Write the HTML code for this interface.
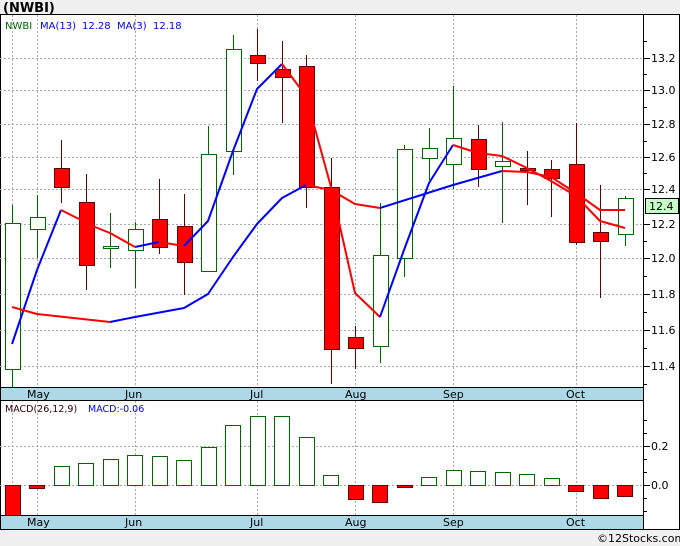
<!DOCTYPE html>
<html><head><meta charset="utf-8"><style>
body{margin:0;width:680px;height:546px;overflow:hidden;background:#f0f0f0;font-family:"DejaVu Sans","Liberation Sans",sans-serif}
</style></head><body>
<svg width="680" height="546" xmlns="http://www.w3.org/2000/svg" style="position:absolute;left:0;top:0" font-family="DejaVu Sans, Liberation Sans, sans-serif">
<rect x="0" y="0" width="680" height="546" fill="#f0f0f0"/>
<text x="3" y="12" font-size="13" font-weight="bold" fill="#000">(NWBI)</text>
<rect x="0.5" y="14.5" width="679" height="515" fill="#fff" stroke="#000"/>
<g stroke="#aaa" stroke-dasharray="2,2" stroke-width="1">
<line x1="0" x2="643" y1="58.5" y2="58.5"/><line x1="0" x2="643" y1="90.5" y2="90.5"/><line x1="0" x2="643" y1="124.5" y2="124.5"/><line x1="0" x2="643" y1="157.5" y2="157.5"/><line x1="0" x2="643" y1="189.5" y2="189.5"/><line x1="0" x2="643" y1="224.5" y2="224.5"/><line x1="0" x2="643" y1="258.5" y2="258.5"/><line x1="0" x2="643" y1="294.5" y2="294.5"/><line x1="0" x2="643" y1="330.5" y2="330.5"/><line x1="0" x2="643" y1="366.5" y2="366.5"/>
<line x1="0" x2="643" y1="446.5" y2="446.5"/><line x1="0" x2="643" y1="485.5" y2="485.5"/>
<line x1="12.5" x2="12.5" y1="15" y2="387"/><line x1="37.5" x2="37.5" y1="15" y2="387"/><line x1="135.5" x2="135.5" y1="15" y2="387"/><line x1="257.5" x2="257.5" y1="15" y2="387"/><line x1="355.5" x2="355.5" y1="15" y2="387"/><line x1="453.5" x2="453.5" y1="15" y2="387"/><line x1="576.5" x2="576.5" y1="15" y2="387"/>
<line x1="12.5" x2="12.5" y1="401" y2="515"/><line x1="37.5" x2="37.5" y1="401" y2="515"/><line x1="135.5" x2="135.5" y1="401" y2="515"/><line x1="257.5" x2="257.5" y1="401" y2="515"/><line x1="355.5" x2="355.5" y1="401" y2="515"/><line x1="453.5" x2="453.5" y1="401" y2="515"/><line x1="576.5" x2="576.5" y1="401" y2="515"/>
</g>
<text x="5" y="29" font-size="10" fill="#060">NWBI</text>
<text x="40" y="29" font-size="10" fill="#00f">MA(13)</text><text x="82" y="29" font-size="10" fill="#00f">12.28</text>
<text x="117" y="29" font-size="10" fill="#00f">MA(3)</text><text x="153" y="29" font-size="10" fill="#00f">12.18</text>
<g id="c" stroke-width="1">
<!-- candles -->
<g stroke="#060" fill="#fff">
<line x1="12.5" x2="12.5" y1="205" y2="387"/><rect x="5.5" y="223.5" width="15" height="146"/>
<line x1="37.5" x2="37.5" y1="195" y2="258"/><rect x="30.5" y="217.5" width="15" height="12"/>
<line x1="110.5" x2="110.5" y1="213" y2="268"/><rect x="103.5" y="246.5" width="15" height="2"/>
<line x1="135.5" x2="135.5" y1="222" y2="288"/><rect x="128.5" y="229.5" width="15" height="21"/>
<line x1="208.5" x2="208.5" y1="126" y2="272"/><rect x="201.5" y="154.5" width="15" height="117"/>
<line x1="233.5" x2="233.5" y1="35" y2="175"/><rect x="226.5" y="49.5" width="15" height="102"/>
<line x1="380.5" x2="380.5" y1="203" y2="363"/><rect x="373.5" y="255.5" width="15" height="91"/>
<line x1="404.5" x2="404.5" y1="145" y2="277"/><rect x="397.5" y="149.5" width="15" height="109"/>
<line x1="429.5" x2="429.5" y1="128" y2="180"/><rect x="422.5" y="148.5" width="15" height="10"/>
<line x1="453.5" x2="453.5" y1="86" y2="189"/><rect x="446.5" y="138.5" width="15" height="26"/>
<line x1="502.5" x2="502.5" y1="122" y2="223"/><rect x="495.5" y="161.5" width="15" height="5"/>
<line x1="625.5" x2="625.5" y1="196" y2="246"/><rect x="618.5" y="198.5" width="15" height="36"/>
</g>
<g stroke="#600" fill="#f00">
<line x1="61.5" x2="61.5" y1="140" y2="203"/><rect x="54.5" y="168.5" width="15" height="19"/>
<line x1="86.5" x2="86.5" y1="174" y2="290"/><rect x="79.5" y="202.5" width="15" height="63"/>
<line x1="159.5" x2="159.5" y1="179" y2="254"/><rect x="152.5" y="219.5" width="15" height="28"/>
<line x1="184.5" x2="184.5" y1="194" y2="295"/><rect x="177.5" y="226.5" width="15" height="36"/>
<line x1="257.5" x2="257.5" y1="29" y2="81"/><rect x="250.5" y="55.5" width="15" height="8"/>
<line x1="282.5" x2="282.5" y1="41" y2="123"/><rect x="275.5" y="69.5" width="15" height="8"/>
<line x1="306.5" x2="306.5" y1="55" y2="208"/><rect x="299.5" y="66.5" width="15" height="121"/>
<line x1="331.5" x2="331.5" y1="158" y2="384"/><rect x="324.5" y="187.5" width="15" height="162"/>
<line x1="355.5" x2="355.5" y1="326" y2="369"/><rect x="348.5" y="337.5" width="15" height="11"/>
<line x1="478.5" x2="478.5" y1="125" y2="187"/><rect x="471.5" y="139.5" width="15" height="30"/>
<line x1="527.5" x2="527.5" y1="151" y2="205"/><rect x="520.5" y="168.5" width="15" height="2"/>
<line x1="551.5" x2="551.5" y1="160" y2="217"/><rect x="544.5" y="169.5" width="15" height="9"/>
<line x1="576.5" x2="576.5" y1="123" y2="245"/><rect x="569.5" y="164.5" width="15" height="78"/>
<line x1="600.5" x2="600.5" y1="185" y2="298"/><rect x="593.5" y="232.5" width="15" height="9"/>
</g>
</g>
<g fill="none" stroke-width="2" stroke-linejoin="round">
<polyline stroke="#00f" points="12,344 37,270 61,210"/>
<polyline stroke="#f00" points="61,210 95,227 110,233 135,247"/>
<polyline stroke="#00f" points="135,247 159,242"/>
<polyline stroke="#f00" points="159,242 184,246"/>
<polyline stroke="#00f" points="184,246 208,221 233,151 257,89 282,64"/>
<polyline stroke="#f00" points="282,64 306,96 331,187 355,293 380,317"/>
<polyline stroke="#00f" points="380,317 404,250 429,183 453,145"/>
<polyline stroke="#f00" points="453,145 478,153 502,156 527,168 551,181 576,196 600,221 625,228"/>
<polyline stroke="#f00" points="12,307 37,314 110,322"/>
<polyline stroke="#00f" points="110,322 135,317 184,308 208,294 233,257 257,224 282,198 306,185"/>
<polyline stroke="#f00" points="306,185 331,190 355,204 380,208"/>
<polyline stroke="#00f" points="380,208 453,185 502,171"/>
<polyline stroke="#f00" points="502,171 527,172 551,177 576,193 600,210 625,210"/>
</g>
<!-- axis -->
<line x1="643.5" x2="643.5" y1="14" y2="530" stroke="#000"/>
<g stroke="#000">
<line x1="643" x2="650" y1="58.5" y2="58.5"/><line x1="643" x2="650" y1="90.5" y2="90.5"/><line x1="643" x2="650" y1="124.5" y2="124.5"/><line x1="643" x2="650" y1="157.5" y2="157.5"/><line x1="643" x2="650" y1="189.5" y2="189.5"/><line x1="643" x2="650" y1="224.5" y2="224.5"/><line x1="643" x2="650" y1="258.5" y2="258.5"/><line x1="643" x2="650" y1="294.5" y2="294.5"/><line x1="643" x2="650" y1="330.5" y2="330.5"/><line x1="643" x2="650" y1="366.5" y2="366.5"/>
<line x1="643" x2="650" y1="446.5" y2="446.5"/><line x1="643" x2="650" y1="485.5" y2="485.5"/>
</g>
<g stroke="#000" stroke-width="1">
<line x1="643" x2="647" y1="41.5" y2="41.5"/><line x1="643" x2="647" y1="74.5" y2="74.5"/><line x1="643" x2="647" y1="107.5" y2="107.5"/><line x1="643" x2="647" y1="141.5" y2="141.5"/><line x1="643" x2="647" y1="173.5" y2="173.5"/><line x1="643" x2="647" y1="241.5" y2="241.5"/><line x1="643" x2="647" y1="276.5" y2="276.5"/><line x1="643" x2="647" y1="312.5" y2="312.5"/><line x1="643" x2="647" y1="348.5" y2="348.5"/><line x1="643" x2="647" y1="384.5" y2="384.5"/>
<line x1="643" x2="647" y1="420.5" y2="420.5"/><line x1="643" x2="647" y1="433.5" y2="433.5"/><line x1="643" x2="647" y1="459.5" y2="459.5"/><line x1="643" x2="647" y1="472.5" y2="472.5"/><line x1="643" x2="647" y1="498.5" y2="498.5"/><line x1="643" x2="647" y1="511.5" y2="511.5"/>
</g>
<g font-size="11" fill="#000">
<text x="651" y="62">13.2</text><text x="651" y="94">13.0</text><text x="651" y="128">12.8</text><text x="651" y="161">12.6</text><text x="651" y="193">12.4</text><text x="651" y="228">12.2</text><text x="651" y="262">12.0</text><text x="651" y="298">11.8</text><text x="651" y="334">11.6</text><text x="651" y="370">11.4</text>
<text x="651" y="450">0.2</text><text x="651" y="489">0.0</text>
</g>
<rect x="645.5" y="198.5" width="33" height="15" fill="#c8fcc8" stroke="#000"/>
<text x="649" y="210" font-size="11" fill="#000">12.4</text>
<!-- bands -->
<rect x="0.5" y="387.5" width="643" height="13" fill="#add8e6" stroke="#000"/>
<rect x="0.5" y="515.5" width="643" height="14" fill="#add8e6" stroke="#000"/>
<g font-size="11" fill="#000">
<text x="27" y="398">May</text><text x="125" y="398">Jun</text><text x="250" y="398">Jul</text><text x="345" y="398">Aug</text><text x="443" y="398">Sep</text><text x="566" y="398">Oct</text>
<text x="27" y="526">May</text><text x="125" y="526">Jun</text><text x="250" y="526">Jul</text><text x="345" y="526">Aug</text><text x="443" y="526">Sep</text><text x="566" y="526">Oct</text>
</g>
<text x="5" y="412" font-size="9.5" fill="#300">MACD(26,12,9)</text>
<text x="88" y="412" font-size="9.5" fill="#00f">MACD:-0.06</text>
<g stroke="#060" fill="#fff">
<rect x="54.5" y="466.5" width="15" height="19"/><rect x="78.5" y="463.5" width="15" height="22"/><rect x="103.5" y="459.5" width="15" height="26"/><rect x="127.5" y="455.5" width="15" height="30"/><rect x="152.5" y="456.5" width="15" height="29"/><rect x="176.5" y="460.5" width="15" height="25"/><rect x="201.5" y="447.5" width="15" height="38"/><rect x="225.5" y="425.5" width="15" height="60"/><rect x="250.5" y="416.5" width="15" height="69"/><rect x="274.5" y="416.5" width="15" height="69"/><rect x="299.5" y="437.5" width="15" height="48"/><rect x="323.5" y="475.5" width="15" height="10"/>
<rect x="421.5" y="477.5" width="15" height="8"/><rect x="446.5" y="470.5" width="15" height="15"/><rect x="470.5" y="471.5" width="15" height="14"/><rect x="495.5" y="472.5" width="15" height="13"/><rect x="519.5" y="474.5" width="15" height="11"/><rect x="544.5" y="478.5" width="15" height="7"/>
</g>
<g stroke="#600" fill="#f00">
<rect x="5.5" y="485.5" width="15" height="30"/><rect x="29.5" y="485.5" width="15" height="3"/>
<rect x="348.5" y="485.5" width="15" height="14"/><rect x="372.5" y="485.5" width="15" height="17"/><rect x="397.5" y="485.5" width="15" height="2"/>
<rect x="568.5" y="485.5" width="15" height="6"/><rect x="593.5" y="485.5" width="15" height="13"/><rect x="617.5" y="485.5" width="15" height="11"/>
</g>
<text x="597" y="542" font-size="11" fill="#000">©12Stocks.com</text>
</svg>
</body></html>
